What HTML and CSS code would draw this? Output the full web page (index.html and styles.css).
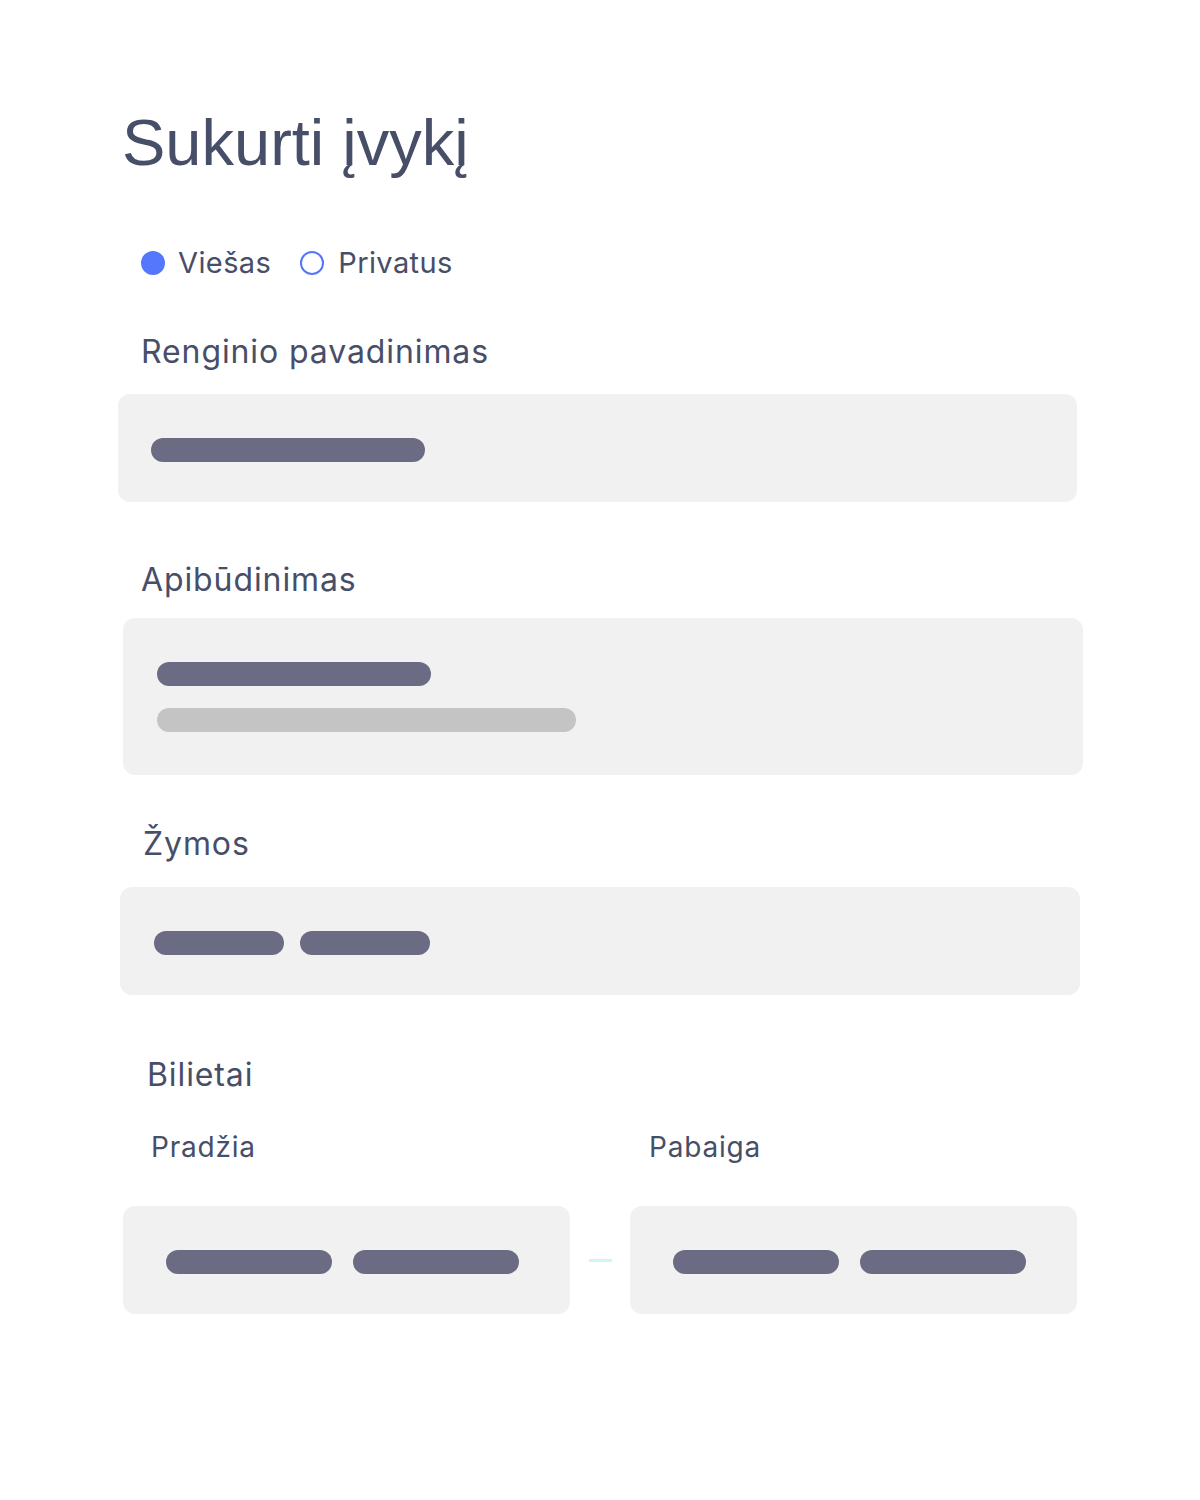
FILE: index.html
```html
<!DOCTYPE html>
<html lang="lt">
<head>
<meta charset="utf-8">
<title>Sukurti įvykį</title>
<link rel="stylesheet" href="styles.css">
</head>
<body>
<main class="page">
  <h1 class="title">Sukurti įvykį</h1>

  <div class="radios">
    <label class="radio"><span class="dot dot-on"></span><span class="radio-text">Viešas</span></label>
    <label class="radio"><span class="dot dot-off"></span><span class="radio-text">Privatus</span></label>
  </div>

  <section class="field field-name">
    <div class="label">Renginio pavadinimas</div>
    <div class="box box-name">
      <span class="bar bar-dark bar-274"></span>
    </div>
  </section>

  <section class="field field-desc">
    <div class="label">Apibūdinimas</div>
    <div class="box box-desc">
      <span class="bar bar-dark bar-274"></span>
      <span class="bar bar-light bar-419"></span>
    </div>
  </section>

  <section class="field field-tags">
    <div class="label">Žymos</div>
    <div class="box box-tags">
      <span class="bar bar-dark bar-130"></span>
      <span class="bar bar-dark bar-130"></span>
    </div>
  </section>

  <section class="field field-tickets">
    <div class="label">Bilietai</div>
    <div class="range">
      <div class="range-col">
        <div class="sublabel">Pradžia</div>
        <div class="box box-half">
          <span class="bar bar-dark bar-166"></span>
          <span class="bar bar-dark bar-166"></span>
        </div>
      </div>
      <span class="dash"></span>
      <div class="range-col range-col-end">
        <div class="sublabel">Pabaiga</div>
        <div class="box box-half">
          <span class="bar bar-dark bar-166"></span>
          <span class="bar bar-dark bar-166"></span>
        </div>
      </div>
    </div>
  </section>
</main>
</body>
</html>
```

FILE: styles.css
```css
html, body {
  margin: 0;
  padding: 0;
  background: #ffffff;
}

body {
  font-family: Inter, "Noto Sans", "Liberation Sans", sans-serif;
  color: #474e68;
}

.page {
  width: 1200px;
  padding-top: 110px;
  box-sizing: border-box;
}

.title {
  margin: 0 0 0 122px;
  font-family: "Liberation Sans", Arial, sans-serif;
  font-weight: 400;
  font-size: 65px;
  line-height: 65px;
  color: #474e68;
}

.radios {
  display: flex;
  align-items: center;
  margin: 73px 0 0 141px;
  height: 29px;
}

.radio {
  display: flex;
  align-items: center;
  margin-right: 29px;
}

.dot {
  width: 24px;
  height: 24px;
  border-radius: 50%;
  box-sizing: border-box;
  margin-right: 13px;
  flex: none;
}

.dot-on {
  background: #5577fb;
}

.dot-off {
  border: 2px solid #5577fb;
  background: #ffffff;
  margin-right: 14px;
}

.radio-text {
  font-size: 29px;
  line-height: 29px;
  letter-spacing: 0.4px;
}

.label {
  font-size: 32px;
  line-height: 32px;
  letter-spacing: 0.9px;
}

.sublabel {
  font-size: 28px;
  line-height: 28px;
  letter-spacing: 0.8px;
}

.field-name { margin: 59px 0 0 141px; }
.field-desc { margin: 62px 0 0 141px; }
.field-tags { margin: 53px 0 0 143px; }
.field-tickets { margin: 64px 0 0 147px; }

.box {
  background: #f1f1f1;
  border-radius: 12px;
  box-sizing: border-box;
  display: flex;
}

.box-name {
  width: 959px;
  height: 108px;
  margin: 26px 0 0 -23px;
  padding: 44px 33px;
}

.box-desc {
  width: 960px;
  height: 157px;
  margin: 22px 0 0 -18px;
  padding: 44px 34px;
  flex-direction: column;
  gap: 22px;
}

.box-tags {
  width: 960px;
  height: 108px;
  margin: 0 0 0 -23px;
  padding: 44px 34px;
  gap: 16px;
}

.field-tags .label { margin-bottom: 27px; }

.range {
  display: flex;
  align-items: flex-end;
  margin: 42px 0 0 -24px;
}

.range-col .sublabel {
  margin: 0 0 45px 28px;
}

.range-col-end .sublabel {
  margin-left: 19px;
}

.box-half {
  width: 447px;
  height: 108px;
  padding: 44px 43px;
  gap: 21px;
}

.dash {
  width: 23px;
  height: 3px;
  background: #cff4fc;
  margin: 0 18px 52px 19px;
  flex: none;
}

.bar {
  display: block;
  height: 24px;
  border-radius: 12px;
  flex: none;
}

.bar-dark { background: #6b6c84; }
.bar-light { background: #c4c4c4; }

.bar-274 { width: 274px; }
.bar-419 { width: 419px; }
.bar-130 { width: 130px; }
.bar-166 { width: 166px; }
```
